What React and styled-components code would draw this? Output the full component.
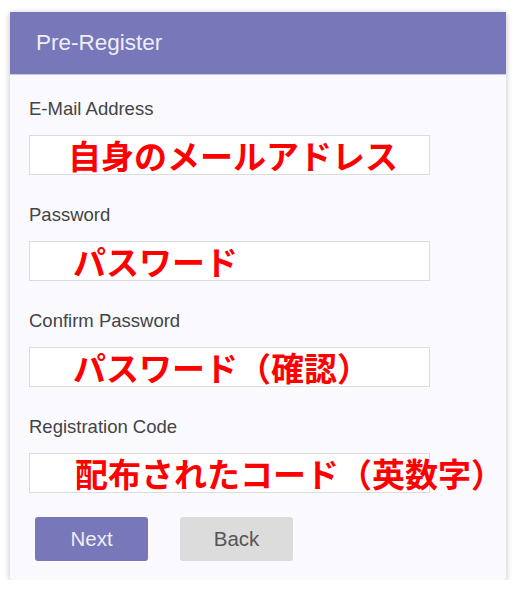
import React from 'react'
import styled, { createGlobalStyle } from 'styled-components'

const Global = createGlobalStyle`
    body{
        margin: 0;
        background: #ffffff;
        font-family: "Liberation Sans", Arial, sans-serif;
    }
`

const fields = [
    { label: 'E-Mail Address', note: '自身のメールアドレス', offset: 38 },
    { label: 'Password', note: 'パスワード', offset: 43 },
    { label: 'Confirm Password', note: 'パスワード（確認）', offset: 43 },
    { label: 'Registration Code', note: '配布されたコード（英数字）', offset: 45 },
]

export default function App() {
    return (
        <Page>
            <Global/>
            <Card>
                <Header>Pre-Register</Header>
                <Body>
                    <Fields>
                        {
                            fields.map(f=>(
                                <Field key={f.label}>
                                    <Label>{f.label}</Label>
                                    <InputBox>
                                        <Note $offset={f.offset}>{f.note}</Note>
                                    </InputBox>
                                </Field>
                            ))
                        }
                    </Fields>
                    <Buttons>
                        <Button $primary>Next</Button>
                        <Button>Back</Button>
                    </Buttons>
                </Body>
            </Card>
        </Page>
    )
}

const Page = styled.div`
    padding: 12px 0 0 10px;
`

const Card = styled.div`
    width: 496px;
    background-color: #f9f9fe;
    box-shadow: 0 1px 6px rgba(0,0,0,0.25);
    border-radius: 2px;
`

const Header = styled.div`
    height: 63px;
    display: flex;
    align-items: center;
    padding-left: 26px;
    background-color: #7777b9;
    color: #eeeef8;
    font-size: 22.5px;
    border-bottom: 1px solid #c9c9e6;
    box-sizing: border-box;
`

const Body = styled.div`
    padding: 23px 0 19px 19px;
`

const Fields = styled.div`
    display: flex;
    flex-direction: column;
    gap: 29px;
`

const Field = styled.div`
    display: flex;
    flex-direction: column;
    gap: 16px;
`

const Label = styled.div`
    font-size: 18.5px;
    line-height: 21px;
    color: #444;
`

const InputBox = styled.div`
    width: 401px;
    height: 40px;
    box-sizing: border-box;
    border: 1px solid #dcdcdc;
    background: #fff;
    display: flex;
    align-items: center;
    overflow: visible;
    white-space: nowrap;
`

const Note = styled.span`
    margin-left: ${p => p.$offset}px;
    color: #ff0000;
    font-family: "Noto Sans CJK JP", sans-serif;
    font-weight: 700;
    font-size: 33px;
    line-height: 40px;
`

const Buttons = styled.div`
    display: flex;
    gap: 32px;
    padding-left: 6px;
    margin-top: 24px;
`

const Button = styled.button`
    width: 113px;
    height: 44px;
    border: none;
    border-radius: 3px;
    font-family: "Liberation Sans", Arial, sans-serif;
    font-size: 20.5px;
    background-color: ${p => p.$primary ? '#7777b9' : '#dcdcdc'};
    color: ${p => p.$primary ? '#eeeef8' : '#555'};
`
